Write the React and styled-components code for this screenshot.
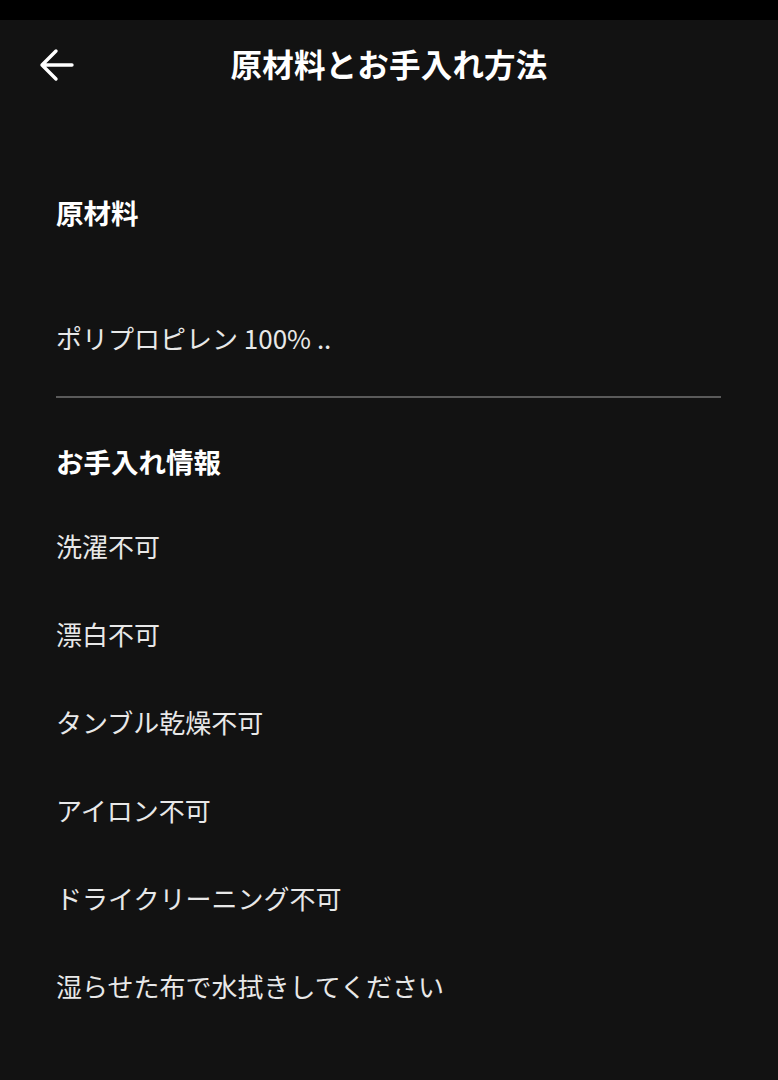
import styled, { createGlobalStyle } from "styled-components";

const GlobalStyle = createGlobalStyle`
  html, body {
    margin: 0;
    padding: 0;
    background: #121212;
  }
  body {
    font-family: "Noto Sans CJK JP", "Noto Sans", sans-serif;
    color: #ececec;
  }
`;

const Screen = styled.div`
  width: 778px;
  min-height: 1080px;
  background: #121212;
  display: flex;
  flex-direction: column;
`;

const StatusBar = styled.div`
  height: 20px;
  background: #000;
`;

const Header = styled.header`
  height: 86px;
  display: flex;
  align-items: center;
  justify-content: center;
  position: relative;
`;

const BackButton = styled.button`
  position: absolute;
  left: 38px;
  top: 28px;
  width: 36px;
  height: 34px;
  padding: 0;
  border: none;
  background: transparent;
  display: flex;
  align-items: center;
  justify-content: center;
  cursor: pointer;
`;

const Title = styled.h1`
  margin: 0;
  font-size: 31.5px;
  font-weight: 700;
  line-height: 40px;
  color: #fff;
  letter-spacing: 0.2px;
`;

const Content = styled.main`
  padding: 0 57px 0 56px;
  display: flex;
  flex-direction: column;
`;

const SectionTitle = styled.h2`
  margin: ${p => p.$top}px 0 0;
  font-size: 27.5px;
  font-weight: 700;
  line-height: 40px;
  color: #fff;
`;

const Material = styled.p`
  margin: 86px 0 0;
  font-size: 26px;
  line-height: 40px;
  font-weight: 400;
  color: #e8e8e8;
`;

const Divider = styled.hr`
  margin: 38px 0 0;
  border: none;
  height: 2px;
  background: #5a5a5a;
`;

const CareList = styled.ul`
  list-style: none;
  margin: 21px 0 0;
  padding: 0;
`;

const CareItem = styled.li`
  height: 88px;
  display: flex;
  align-items: center;
  font-size: 26px;
  line-height: 40px;
  color: #e8e8e8;
`;

const BackArrow = () => (
  <svg width="36" height="34" viewBox="0 0 36 34" fill="none">
    <path
      d="M34 17H4M18 3L4 17L18 31"
      stroke="#fff"
      strokeWidth="3.4"
      strokeLinecap="round"
      strokeLinejoin="round"
    />
  </svg>
);

const careInfo = [
  "洗濯不可",
  "漂白不可",
  "タンブル乾燥不可",
  "アイロン不可",
  "ドライクリーニング不可",
  "湿らせた布で水拭きしてください",
];

export default function App() {
  return (
    <>
      <GlobalStyle />
      <Screen>
        <StatusBar />
        <Header>
          <BackButton aria-label="戻る">
            <BackArrow />
          </BackButton>
          <Title>原材料とお手入れ方法</Title>
        </Header>
        <Content>
          <SectionTitle $top={86}>原材料</SectionTitle>
          <Material>ポリプロピレン 100% ..</Material>
          <Divider />
          <SectionTitle $top={43}>お手入れ情報</SectionTitle>
          <CareList>
            {careInfo.map(item => (
              <CareItem key={item}>{item}</CareItem>
            ))}
          </CareList>
        </Content>
      </Screen>
    </>
  );
}
